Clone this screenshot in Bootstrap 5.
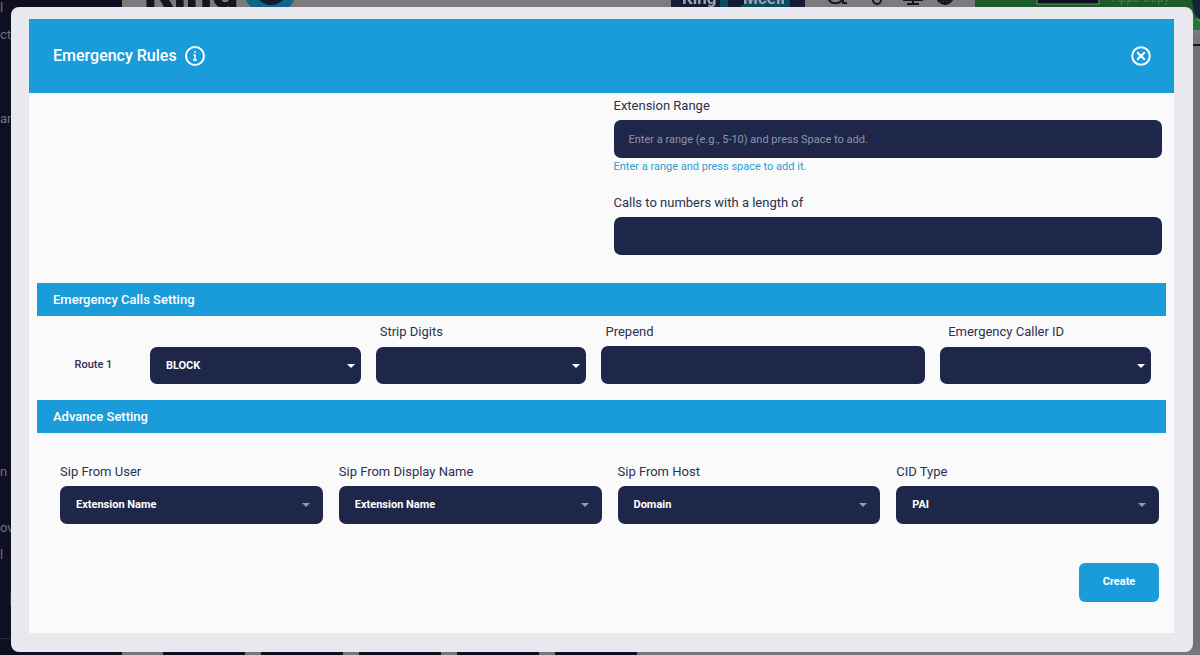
<!DOCTYPE html>
<html lang="en">
<head>
<meta charset="utf-8">
<meta name="viewport" content="width=device-width, initial-scale=1">
<title>Emergency Rules</title>
<link href="https://cdn.jsdelivr.net/npm/bootstrap@5.3.0/dist/css/bootstrap.min.css" rel="stylesheet">
<style>
  :root { --sky: #1b9cda; --navy: #1e274a; --ink: #2d3050; }
  body { font-family: Roboto, sans-serif; font-size: 13px; line-height: 16px; color: var(--ink); background: #717073; }

  /* dimmed page under the dialog */
  .backdrop-page { z-index: 0; }
  .side { width: 122px; background: #0e1022; color: #6f7180; font-size: 13px; line-height: 16px; }
  .side-gap-sm { height: 11px; }
  .side-gap-md { height: 40px; }
  .side-gap-lg { height: 68px; }
  .side-gap-xl { height: 337px; }
  .side-box { width: 20px; height: 14px; margin-left: 10px; background: #353747; }
  .side-foot { border-top: 1px solid #25283a; height: 17px; }
  .topbar { height: 34px; background: #7b7b7c; }
  .topbar svg { width: 100%; height: 34px; }
  .rule-line { height: 12px; border-bottom: 2px solid #19191f; background: #77777a; }
  .foot-tabs { height: 6px; gap: 16px; padding-left: 41px; background: #777; }
  .foot-tabs span { width: 82px; background: #0e0e20; }

  /* dialog */
  .sheet { z-index: 1; margin: 7px 7px 3px 11px; padding: 12px 19px 19px 18px; background: #e8e8ee; border-radius: 8px; }
  .panel { background: #fafafa; min-height: 614px; }
  .panel-head { background: var(--sky); color: #fff; min-height: 74px; padding: 0 23px 0 24px; }
  .panel-head h1 { font-size: 16px; line-height: 20px; font-weight: 500; }
  .icon-btn { width: 20px; height: 20px; color: #fff; }
  .icon-btn svg { width: 20px; height: 20px; }
  .field-label { display: block; font-size: 13px; line-height: 16px; margin-bottom: 6px; }
  .dark-field { display: block; width: 100%; height: 38px; border: 0; border-radius: 7px; padding: 0 15px; background-color: var(--navy); color: #fff; font-size: 11px; font-weight: 700; }
  .dark-field::placeholder { color: #8e93ab; font-weight: 400; opacity: 1; }
  select.dark-field { appearance: none; padding-left: 16px; background-repeat: no-repeat; background-size: 8px 4px; background-position: right 13px center;
    background-image: url("data:image/svg+xml,%3Csvg xmlns='http://www.w3.org/2000/svg' viewBox='0 0 8 4'%3E%3Cpath d='M0 0h8L4 4z' fill='%239499b0'/%3E%3C/svg%3E"); }
  .route-row select.dark-field { height: 37px; background-position: right 6px center;
    background-image: url("data:image/svg+xml,%3Csvg xmlns='http://www.w3.org/2000/svg' viewBox='0 0 8 4'%3E%3Cpath d='M0 0h8L4 4z' fill='%23fff'/%3E%3C/svg%3E"); }
  .hint { font-size: 11px; line-height: 18px; color: #2a9fcf; }
  .calls-block { padding-top: 5px; margin-bottom: 28px; }
  .calls-block .hint { margin-bottom: 19px; }
  .band { background: var(--sky); color: #fff; margin: 0 8px; padding: 0 16px; font-size: 13px; line-height: 33px; font-weight: 500; }
  .route-row { margin: 8px 8px 16px; }
  .w-10 { width: 10%; } .w-20 { width: 20%; } .w-30 { width: 30%; }
  .route-cell { padding-right: 15px; }
  .route-cell .field-label { margin-left: 4px; }
  .route-cell .over-select { margin-bottom: 7px; }
  .route-name { font-size: 11px; line-height: 38px; font-weight: 500; }
  .sip-grid { display: grid; grid-template-columns: repeat(4, 1fr); gap: 16px; margin: 31px 15px 39px 31px; }
  .create-btn { width: 80px; height: 39px; margin-right: 15px; margin-bottom: 31px; border: 0; border-radius: 6px; background: var(--sky); color: #fff; font-size: 11px; font-weight: 700; }
</style>
<script src="https://cdn.jsdelivr.net/npm/bootstrap@5.3.0/dist/js/bootstrap.bundle.min.js"></script>
</head>
<body>

<div class="backdrop-page position-fixed top-0 start-0 w-100 h-100 d-flex overflow-hidden" aria-hidden="true">
  <div class="side flex-shrink-0 d-flex flex-column">
    <div>l</div>
    <div class="side-gap-sm"></div>
    <div>cte</div>
    <div class="side-gap-lg"></div>
    <div>an</div>
    <div class="side-gap-xl"></div>
    <div>n</div>
    <div class="side-gap-md"></div>
    <div>ov</div>
    <div class="side-gap-sm"></div>
    <div>l</div>
    <div class="side-box mt-auto mb-4"></div>
    <div class="side-foot mt-2"></div>
  </div>
  <div class="flex-grow-1 d-flex flex-column">
    <div class="topbar">
      <svg viewBox="0 0 1078 34" preserveAspectRatio="xMinYMin slice">
        <text x="22" y="8" font-size="46" font-weight="900" fill="#15151f">King</text>
        <circle cx="148" cy="-12" r="27" fill="#12658a"/>
        <circle cx="149" cy="-12" r="17" fill="#101c36"/>
        <rect x="549" width="134" height="34" fill="#151c35"/>
        <path d="M598 0h70v7h-70z" fill="#0d4b60"/>
        <path d="M606 0h20l-8 7h-12z" fill="#111b34"/>
        <text x="560" y="4" font-size="17" font-weight="700" fill="#9fa2ad">King</text>
        <text x="621" y="4" font-size="17" font-weight="700" fill="#9fa2ad">Mcell</text>
        <g fill="none" stroke="#17171c" stroke-width="2">
          <path d="M706-2a8 8 0 0 0 15 0M721-1v4h4"/>
          <circle cx="755" cy="0" r="4"/>
          <path d="M781 0h20M791 0v4M785 4h12"/>
          <circle cx="823" cy="-4" r="8"/><path d="M823-4v8M818-4q1 6 5 8q4-2 5-8M816 0h14"/>
        </g>
        <rect x="853" width="222" height="30" fill="#1d5a28"/>
        <rect x="915" y="-20" width="62" height="24" fill="#0c1320" stroke="#7d8b80"/>
        <text x="990" y="2" font-size="12" fill="#438049">Apps Copy</text>
        <path d="M1070 0q1 16 8 20V0z" fill="#14233a"/>
        <path d="M1068 0q1 17 10 22v8h-7z" fill="#1d7a31"/>
      </svg>
    </div>
    <div class="rule-line"></div>
    <div class="foot-tabs mt-auto d-flex"><span></span><span></span><span></span><span></span><span></span></div>
  </div>
</div>

<main class="sheet position-relative" role="dialog" aria-labelledby="dialog-title">
  <form class="panel">
    <header class="panel-head d-flex align-items-center">
      <h1 class="m-0" id="dialog-title">Emergency Rules</h1>
      <button type="button" class="icon-btn btn p-0 border-0 d-flex ms-2" aria-label="Information">
        <svg viewBox="0 0 20 20" fill="none" stroke="currentColor" stroke-width="2"><circle cx="10" cy="10" r="9"/><path d="M10 5v2M8.5 9H10v5M8 14h4" stroke-width="1.5"/></svg>
      </button>
      <button type="button" class="icon-btn btn p-0 border-0 d-flex ms-auto" aria-label="Close">
        <svg viewBox="0 0 20 20" fill="none" stroke="currentColor" stroke-width="2"><circle cx="10" cy="10" r="8.8"/><path d="M6.2 6.2l7.6 7.6M13.8 6.2l-7.6 7.6"/></svg>
      </button>
    </header>

    <div class="row mx-0 calls-block">
      <div class="col-6 offset-6">
        <label class="field-label" for="range">Extension Range</label>
        <input class="dark-field" id="range" type="text" placeholder="Enter a range (e.g., 5-10) and press Space to add.">
        <div class="hint">Enter a range and press space to add it.</div>
        <label class="field-label" for="length">Calls to numbers with a length of</label>
        <input class="dark-field" id="length" type="text">
      </div>
    </div>

    <h2 class="band">Emergency Calls Setting</h2>
    <div class="route-row d-flex align-items-end">
      <div class="w-10 route-name text-center">Route 1</div>
      <div class="w-20 route-cell">
        <select class="dark-field" aria-label="Route 1 action"><option>BLOCK</option></select>
      </div>
      <div class="w-20 route-cell">
        <label class="field-label over-select" for="strip">Strip Digits</label>
        <select class="dark-field" id="strip"><option></option></select>
      </div>
      <div class="w-30 route-cell">
        <label class="field-label" for="prepend">Prepend</label>
        <input class="dark-field" id="prepend" type="text">
      </div>
      <div class="w-20 route-cell">
        <label class="field-label over-select ms-2" for="callerid">Emergency Caller ID</label>
        <select class="dark-field" id="callerid"><option></option></select>
      </div>
    </div>

    <h2 class="band">Advance Setting</h2>
    <div class="sip-grid">
      <div>
        <label class="field-label" for="sipuser">Sip From User</label>
        <select class="dark-field" id="sipuser"><option>Extension Name</option></select>
      </div>
      <div>
        <label class="field-label" for="sipname">Sip From Display Name</label>
        <select class="dark-field" id="sipname"><option>Extension Name</option></select>
      </div>
      <div>
        <label class="field-label" for="siphost">Sip From Host</label>
        <select class="dark-field" id="siphost"><option>Domain</option></select>
      </div>
      <div>
        <label class="field-label" for="cid">CID Type</label>
        <select class="dark-field" id="cid"><option>PAI</option></select>
      </div>
    </div>
    <div class="d-flex justify-content-end">
      <button type="submit" class="create-btn btn p-0">Create</button>
    </div>
  </form>
</main>
</body>
</html>
